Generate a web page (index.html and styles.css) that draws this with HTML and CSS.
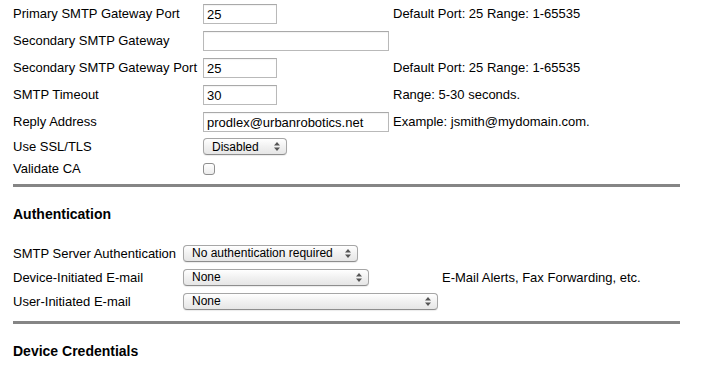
FILE: index.html
```html
<!DOCTYPE html>
<html lang="en">
<head>
    <meta charset="UTF-8">
    <title>E-mail Settings</title>
    <link rel="stylesheet" href="styles.css">
</head>
<body>

    <div class="page">
        <table class="settings smtp">
            <tr>
                <td class="label">Primary SMTP Gateway Port</td>
                <td><input type="text" class="short" value="25"></td>
                <td class="hint">Default Port: 25 Range: 1-65535</td>
            </tr>
            <tr>
                <td class="label">Secondary SMTP Gateway</td>
                <td><input type="text" class="long" value=""></td>
                <td class="hint"></td>
            </tr>
            <tr>
                <td class="label">Secondary SMTP Gateway Port</td>
                <td><input type="text" class="short" value="25"></td>
                <td class="hint">Default Port: 25 Range: 1-65535</td>
            </tr>
            <tr>
                <td class="label">SMTP Timeout</td>
                <td><input type="text" class="short" value="30"></td>
                <td class="hint">Range: 5-30 seconds.</td>
            </tr>
            <tr>
                <td class="label">Reply Address</td>
                <td><input type="text" class="long" value="prodlex@urbanrobotics.net"></td>
                <td class="hint">Example: jsmith@mydomain.com.</td>
            </tr>
            <tr class="row-ssl">
                <td class="label">Use SSL/TLS</td>
                <td>
                    <span class="select" style="width: 84px">
                        <select><option>Disabled</option></select>
                        <svg class="arrows" width="6" height="9" viewBox="0 0 6 9"><path d="M0 3.5L3 0L6 3.5Z M0 5.5L3 9L6 5.5Z" fill="#555"/></svg>
                    </span>
                </td>
                <td class="hint"></td>
            </tr>
            <tr class="row-check">
                <td class="label">Validate CA</td>
                <td><span class="checkbox"></span></td>
                <td class="hint"></td>
            </tr>
        </table>

        <hr>

        <h3>Authentication</h3>

        <table class="settings auth">
            <tr>
                <td class="label">SMTP Server Authentication</td>
                <td>
                    <span class="select" style="width: 175px">
                        <select><option>No authentication required</option></select>
                        <svg class="arrows" width="6" height="9" viewBox="0 0 6 9"><path d="M0 3.5L3 0L6 3.5Z M0 5.5L3 9L6 5.5Z" fill="#555"/></svg>
                    </span>
                </td>
                <td class="hint"></td>
            </tr>
            <tr>
                <td class="label">Device-Initiated E-mail</td>
                <td>
                    <span class="select" style="width: 186px">
                        <select><option>None</option></select>
                        <svg class="arrows" width="6" height="9" viewBox="0 0 6 9"><path d="M0 3.5L3 0L6 3.5Z M0 5.5L3 9L6 5.5Z" fill="#555"/></svg>
                    </span>
                </td>
                <td class="hint">E-Mail Alerts, Fax Forwarding, etc.</td>
            </tr>
            <tr>
                <td class="label">User-Initiated E-mail</td>
                <td>
                    <span class="select" style="width: 255px">
                        <select><option>None</option></select>
                        <svg class="arrows" width="6" height="9" viewBox="0 0 6 9"><path d="M0 3.5L3 0L6 3.5Z M0 5.5L3 9L6 5.5Z" fill="#555"/></svg>
                    </span>
                </td>
                <td class="hint"></td>
            </tr>
        </table>

        <hr>

        <h3>Device Credentials</h3>
    </div>

</body>
</html>
```

FILE: styles.css
```css
body {
    margin: 0;
    padding: 0;
    background-color: #ffffff;
    font-family: "Liberation Sans", Arial, Helvetica, sans-serif;
    font-size: 13px;
    color: #000;
}

.page {
    width: 667px;
    padding-left: 13px;
}

.settings {
    border-collapse: collapse;
    table-layout: fixed;
}

.settings td {
    padding: 0;
    vertical-align: middle;
    white-space: nowrap;
}

.smtp tr {
    height: 27px;
}

.smtp .row-ssl {
    height: 23px;
}

.smtp .row-check {
    height: 21px;
}

.smtp .label {
    width: 190px;
}

.smtp td:nth-child(2) {
    width: 190px;
}

.auth {
    margin-top: 19px;
}

.auth tr {
    height: 24px;
}

.auth .label {
    width: 170px;
}

.auth td:nth-child(2) {
    width: 259px;
}

input[type="text"] {
    box-sizing: border-box;
    height: 20px;
    margin: 0;
    padding: 1px 3px 0;
    border: 1px solid #b9b9b9;
    border-top-color: #a9a9a9;
    font-family: "Liberation Sans", Arial, Helvetica, sans-serif;
    font-size: 13px;
    color: #000;
    box-shadow: inset 0 1px 1px rgba(0,0,0,0.05);
}

.short {
    width: 74px;
}

.long {
    width: 186px;
}

.select {
    position: relative;
    display: inline-block;
    vertical-align: middle;
}

.select select {
    appearance: none;
    -webkit-appearance: none;
    box-sizing: border-box;
    width: 100%;
    height: 17px;
    margin: 0;
    padding: 0 0 0 8px;
    border: 1px solid #a6a6a6;
    border-bottom-color: #8e8e8e;
    border-radius: 4px;
    background: linear-gradient(#ffffff, #f1f1f1 50%, #e6e6e6);
    font-family: "Liberation Sans", Arial, Helvetica, sans-serif;
    font-size: 12px;
    color: #000;
    box-shadow: 0 1px 1px rgba(0,0,0,0.08);
    display: block;
}

.select .arrows {
    position: absolute;
    right: 7px;
    top: 4px;
}

.checkbox {
    display: block;
    box-sizing: border-box;
    width: 12px;
    height: 12px;
    margin-top: 1px;
    border: 1px solid #8f8f8f;
    border-radius: 3px;
    background: linear-gradient(#ffffff, #ececec);
}

.hint {
    padding-left: 0;
}

hr {
    height: 3px;
    margin: 5px 0 0;
    border: 0;
    background-color: #858585;
}

h3 {
    margin: 19px 0 0;
    height: 16px;
    font-size: 14px;
    font-weight: bold;
    line-height: 16px;
}

.auth + hr {
    margin-top: 8px;
}
```
